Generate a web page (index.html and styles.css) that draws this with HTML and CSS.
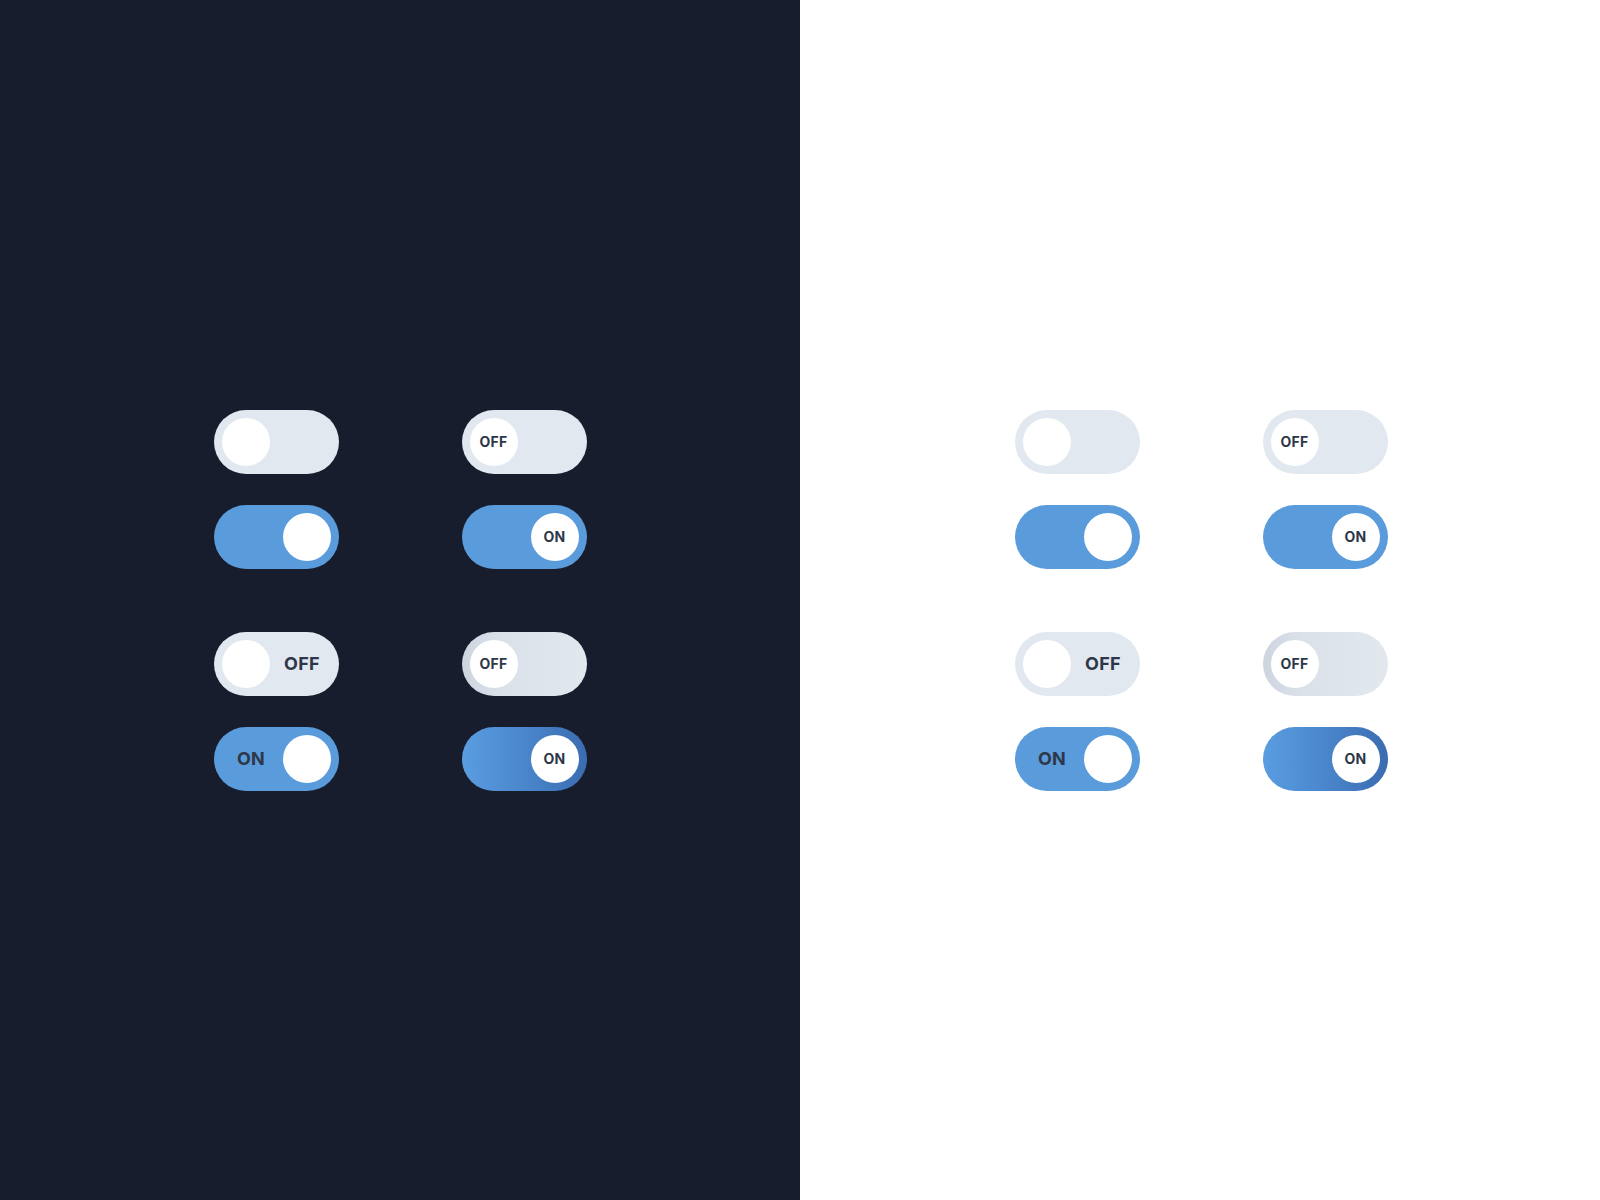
FILE: index.html
```html
<!DOCTYPE html>
<html lang="en">
<head>
<meta charset="utf-8">
<title>Toggle switches</title>
<link rel="stylesheet" href="styles.css">
</head>
<body>
<main class="page">
  <section class="panel panel-dark">
    <div class="board">
      <div class="group">
        <div class="toggle off"><span class="knob"></span></div>
        <div class="toggle off"><span class="knob knob-label">OFF</span></div>
        <div class="toggle on"><span class="knob"></span></div>
        <div class="toggle on"><span class="knob knob-label">ON</span></div>
      </div>
      <div class="group">
        <div class="toggle off"><span class="knob"></span><span class="track-label">OFF</span></div>
        <div class="toggle off grad"><span class="knob knob-label">OFF</span></div>
        <div class="toggle on"><span class="track-label">ON</span><span class="knob"></span></div>
        <div class="toggle on grad"><span class="knob knob-label">ON</span></div>
      </div>
    </div>
  </section>
  <section class="panel panel-light">
    <div class="board">
      <div class="group">
        <div class="toggle off"><span class="knob"></span></div>
        <div class="toggle off"><span class="knob knob-label">OFF</span></div>
        <div class="toggle on"><span class="knob"></span></div>
        <div class="toggle on"><span class="knob knob-label">ON</span></div>
      </div>
      <div class="group">
        <div class="toggle off"><span class="knob"></span><span class="track-label">OFF</span></div>
        <div class="toggle off grad"><span class="knob knob-label">OFF</span></div>
        <div class="toggle on"><span class="track-label">ON</span><span class="knob"></span></div>
        <div class="toggle on grad"><span class="knob knob-label">ON</span></div>
      </div>
    </div>
  </section>
</main>
</body>
</html>
```

FILE: styles.css
```css
* {
  box-sizing: border-box;
}

html, body {
  margin: 0;
  padding: 0;
}

body {
  font-family: Inter, "Noto Sans", "Liberation Sans", sans-serif;
  color: #2d3748;
}

.page {
  display: grid;
  grid-template-columns: 800px 800px;
  height: 1200px;
}

.panel {
  display: flex;
  align-items: center;
  justify-content: center;
}

.panel-dark {
  background: #171d2c;
}

.panel-light {
  background: #ffffff;
  padding-left: 2px;
}

.board {
  display: flex;
  flex-direction: column;
  gap: 63px;
}

.group {
  display: grid;
  grid-template-columns: 125px 125px;
  column-gap: 123px;
  row-gap: 31px;
}

.toggle {
  width: 125px;
  height: 64px;
  border-radius: 32px;
  padding: 8px;
  display: flex;
  align-items: center;
}

.toggle.off {
  background: #e2e8f0;
  justify-content: flex-start;
}

.toggle.on {
  background: #5a9bdc;
  justify-content: flex-end;
}

.toggle.off.grad {
  background: linear-gradient(90deg, #cdd5df 0%, #dbe1e9 30%, #e3e8ef 100%);
}

.toggle.on.grad {
  background: linear-gradient(90deg, #5a9de0 0%, #4a86cc 50%, #3b6cb0 100%);
}

.knob {
  flex: none;
  width: 48px;
  height: 48px;
  border-radius: 50%;
  background: #ffffff;
  display: flex;
  align-items: center;
  justify-content: center;
}

.knob-label {
  font-size: 14px;
  font-weight: 700;
  letter-spacing: 0.2px;
  color: #2d3748;
}

.track-label {
  flex: 1;
  text-align: center;
  font-size: 18px;
  font-weight: 700;
  letter-spacing: 0.3px;
  color: #2d3748;
}

.toggle.off .track-label {
  padding-left: 4px;
}

.toggle.on .track-label {
  padding-right: 2px;
}
```
